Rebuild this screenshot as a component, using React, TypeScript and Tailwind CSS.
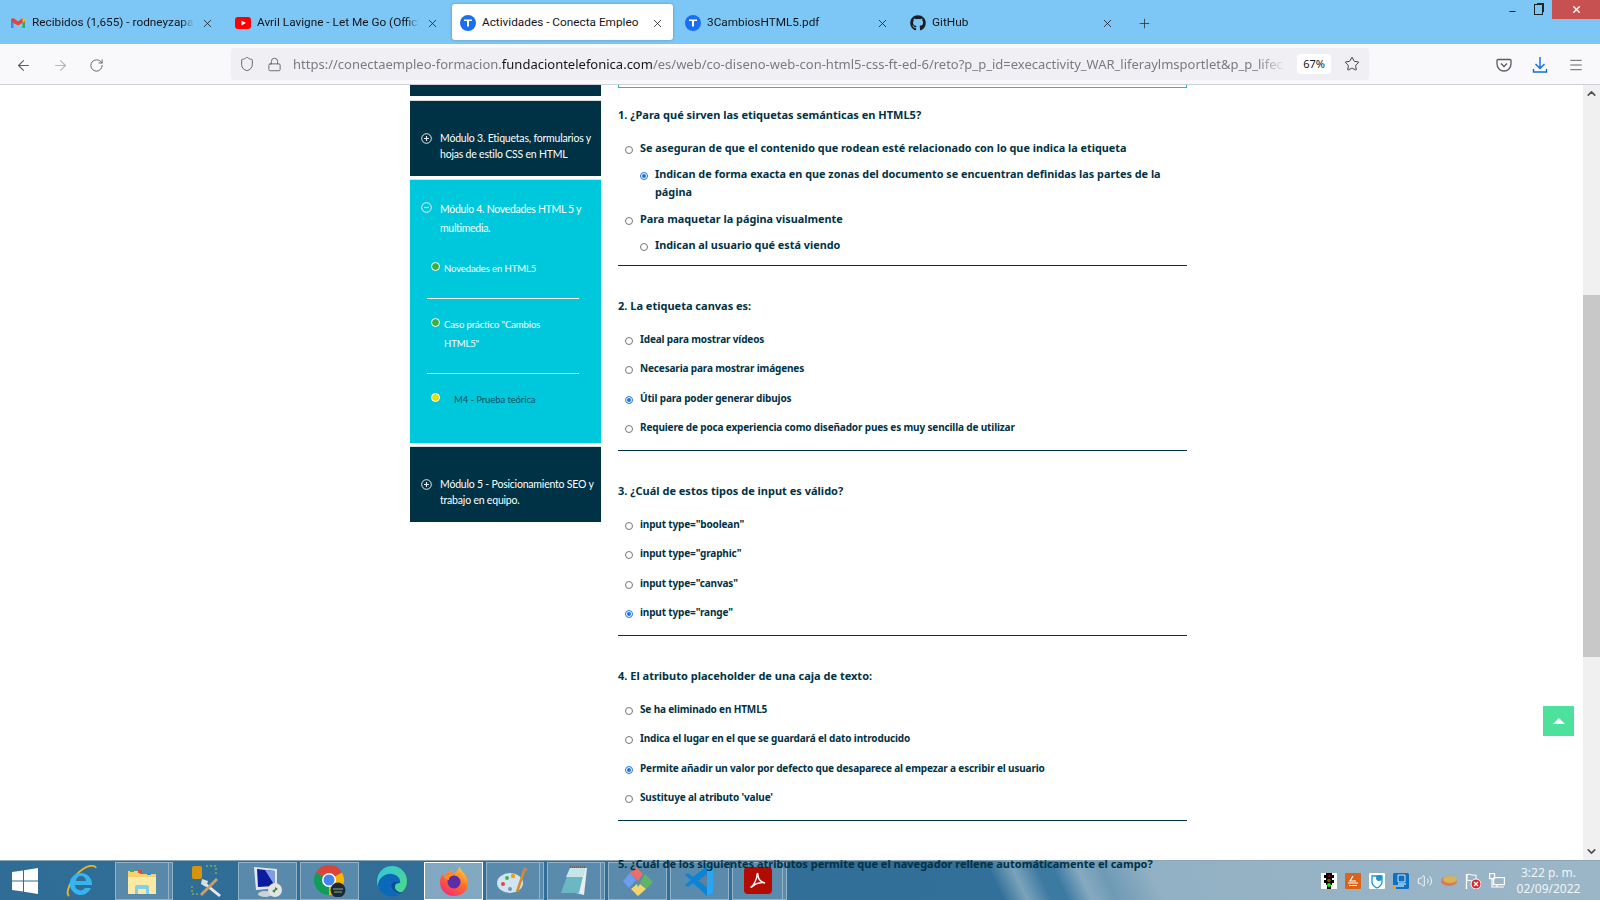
import { ArrowLeft, ArrowRight, RotateCw, Shield, Lock, Star, Menu, X, Plus, ChevronUp, ChevronDown, Minus, Volume2 } from 'lucide-react';
import { FaGithub } from 'react-icons/fa';

type Opcion = { texto: string; sub?: boolean; marcada?: boolean };

const TABS = [
  { titulo: 'Recibidos (1,655) - rodneyzapata@gmail.com', icono: 'gmail' },
  { titulo: 'Avril Lavigne - Let Me Go (Official Video)', icono: 'youtube' },
  { titulo: 'Actividades - Conecta Empleo', icono: 't', activa: true },
  { titulo: '3CambiosHTML5.pdf', icono: 't' },
  { titulo: 'GitHub', icono: 'github' },
];

const Q2: Opcion[] = [
  { texto: 'Ideal para mostrar vídeos' },
  { texto: 'Necesaria para mostrar imágenes' },
  { texto: 'Útil para poder generar dibujos', marcada: true },
  { texto: 'Requiere de poca experiencia como diseñador pues es muy sencilla de utilizar' },
];
const Q3: Opcion[] = [
  { texto: 'input type="boolean"' },
  { texto: 'input type="graphic"' },
  { texto: 'input type="canvas"' },
  { texto: 'input type="range"', marcada: true },
];
const Q4: Opcion[] = [
  { texto: 'Se ha eliminado en HTML5' },
  { texto: 'Indica el lugar en el que se guardará el dato introducido' },
  { texto: 'Permite añadir un valor por defecto que desaparece al empezar a escribir el usuario', marcada: true },
  { texto: "Sustituye al atributo 'value'" },
];

function TIcon() {
  return (
    <div className="w-4 h-4 rounded-full bg-[#1a6ff0] flex items-center justify-center shrink-0">
      <svg width="10" height="10" viewBox="0 0 10 10"><path d="M1 1.500h8v1.600H6v5.400H4V3.100H1z" fill="#fff" /></svg>
    </div>
  );
}

function TabIcon({ tipo }: { tipo: string }) {
  if (tipo === 't') return <TIcon />;
  if (tipo === 'github') return <FaGithub size={16} className="text-[#1b1f24] shrink-0" />;
  if (tipo === 'youtube') {
    return (
      <svg width="16" height="16" viewBox="0 0 16 16" className="shrink-0">
        <rect y="2" width="16" height="12" rx="3" fill="#f00" />
        <path d="M6.500 5.500 11 8l-4.500 2.500z" fill="#fff" />
      </svg>
    );
  }
  return (
    <svg width="16" height="16" viewBox="0 0 16 16" className="shrink-0">
      <path d="M1 4v9h2.500V6.500z" fill="#4285f4" />
      <path d="M15 4v9h-2.500V6.500z" fill="#34a853" />
      <path d="M12.500 3 15 4v2l-2.500 2z" fill="#fbbc04" />
      <path d="M3.500 3 1 4v2l2.500 2L8 10.500 12.500 8V3L8 6.500z" fill="#ea4335" />
    </svg>
  );
}

function Tab({ titulo, icono, activa }: { titulo: string; icono: string; activa?: boolean }) {
  return (
    <div className={`w-[221px] mr-1 h-9 flex items-center pl-2 pt-[2px] rounded-[3px] ${activa ? 'bg-white shadow-[0_0_3px_rgba(0,0,0,0.25)]' : ''}`}>
      <TabIcon tipo={icono} />
      <span className={`ml-[6px] w-[162px] overflow-hidden whitespace-nowrap font-['Roboto',sans-serif] text-[11.8px] text-[#15141a] ${activa ? '' : '[mask-image:linear-gradient(to_right,black_92%,transparent)]'}`}>
        {titulo}
      </span>
      <X size={13} strokeWidth={1.4} className="ml-[7px] text-[#15141a]" />
    </div>
  );
}

function Radio({ marcada }: { marcada?: boolean }) {
  return (
    <span className={`w-2 h-2 rounded-full border shrink-0 flex items-center justify-center bg-white ${marcada ? 'border-[#1a73e8]' : 'border-[#767676]'}`}>
      {marcada && <span className="w-1 h-1 rounded-full bg-[#1a73e8]" />}
    </span>
  );
}

function OpcionGrande({ texto, sub, marcada }: Opcion) {
  return (
    <div className={`flex items-start ${sub ? 'pl-[22px] pr-2' : 'pl-[7px]'} ${marcada ? 'pb-px' : ''}`}>
      <span className="mt-[7px]"><Radio marcada={marcada} /></span>
      <span className="ml-[7px] text-[10.85px] leading-[18px] font-bold text-[#003245]">{texto}</span>
    </div>
  );
}

function Pregunta({ titulo, opciones }: { titulo: string; opciones: Opcion[] }) {
  return (
    <div className="h-[185px] border-b border-[#003245] box-border pt-[30px]">
      <div className="h-5 flex items-center text-[11px] font-bold text-[#003245]">{titulo}</div>
      <div className="mt-[9px]">
        {opciones.map((o) => (
          <div key={o.texto} className="h-[29.33px] flex items-center pl-[7px]">
            <span className="mt-[3px]"><Radio marcada={o.marcada} /></span>
            <span className="ml-[7px] text-[10px] font-bold text-[#003245] tracking-[-0.15px]">{o.texto}</span>
          </div>
        ))}
      </div>
    </div>
  );
}

function CircleIcon({ mas }: { mas?: boolean }) {
  return (
    <svg width="11" height="11" viewBox="0 0 11 11" className="shrink-0">
      <circle cx="5.500" cy="5.500" r="4.800" fill="none" stroke="#e8eef0" strokeWidth="1" />
      <path d={mas ? 'M3 5.500h5M5.500 3v5' : 'M3 5.500h5'} stroke="#e8eef0" strokeWidth="1.200" />
    </svg>
  );
}

function ModuloOscuro({ lineas }: { lineas: string[] }) {
  return (
    <div className="h-[76px] bg-[#003245] border-t border-[#dddddd] flex items-center pl-[11px]">
      <CircleIcon mas />
      <div className="ml-2 mt-[14px] text-[10.5px] leading-4 text-white tracking-[-0.2px] whitespace-nowrap">
        {lineas.map((l) => <div key={l}>{l}</div>)}
      </div>
    </div>
  );
}

function Punto({ color }: { color: string }) {
  return <span className={`w-[9px] h-[9px] rounded-full border border-white shrink-0 ${color}`} />;
}

function Chip({ sliver, activo, ancho, children }: { sliver?: boolean; activo?: boolean; ancho: string; children: React.ReactNode }) {
  return (
    <div className="flex h-[38px] mr-[3px]">
      <div className={`${ancho} flex items-center justify-center border ${activo ? 'bg-white/40 border-white' : 'bg-white/20 border-white/35'}`}>
        {children}
      </div>
      {sliver && <div className="w-1 bg-white/20 border border-white/35 border-l-0" />}
    </div>
  );
}

function Edge() {
  return (
    <svg width="32" height="32" viewBox="0 0 32 32">
      <defs>
        <linearGradient id="edge1" x1="0" y1="0" x2="1" y2="1"><stop offset="0" stopColor="#33c6e0" /><stop offset="1" stopColor="#4fdc7c" /></linearGradient>
      </defs>
      <circle cx="16" cy="16" r="15" fill="url(#edge1)" />
      <path d="M2 20c1-8 8-12 14-11 6 1 9 5 8 9-5 1-9-1-9 3s5 8 9 8c-4 3-8 3-12 2C6 29 2 25 2 20z" fill="#0c68b8" />
      <path d="M15 21c0 4 5 8 9 8l3-2c-3 1-8-1-8-5s3-4 5-4c-3-2-9-2-9 3z" fill="#0a4f96" />
    </svg>
  );
}

function Chrome() {
  return (
    <svg width="32" height="32" viewBox="0 0 32 32">
      <path d="M15 15 2 7.500A15 15 0 0 1 28 7.500z" fill="#db4437" />
      <path d="M15 15 28 7.500A15 15 0 0 1 15 30z" fill="#f4b400" />
      <path d="M15 15V30A15 15 0 0 1 2 7.500z" fill="#0f9d58" />
      <circle cx="15" cy="15" r="7" fill="#fff" />
      <circle cx="15" cy="15" r="5.500" fill="#4285f4" />
      <circle cx="24" cy="25" r="7.500" fill="#1c2b33" />
      <path d="M19 24h10M20 27h8" stroke="#8fa89a" strokeWidth="1" />
    </svg>
  );
}

function Firefox() {
  return (
    <svg width="32" height="32" viewBox="0 0 32 32">
      <defs>
        <linearGradient id="ff1" x1="0.8" y1="0" x2="0.2" y2="1"><stop offset="0" stopColor="#ffd23a" /><stop offset="0.5" stopColor="#ff6a2b" /><stop offset="1" stopColor="#f5267a" /></linearGradient>
      </defs>
      <path d="M21 1c1 4 9 9 9 17 0 8-6 13-14 13S2 25 2 17c0-4 2-7 3-8 0 2 1 3 2 3 1-4 4-6 7-7-1 2 0 3 1 3 3 0 6-3 6-7z" fill="url(#ff1)" />
      <circle cx="16" cy="17" r="6.500" fill="#5a2ea6" />
      <path d="M6 12c3-3 8-4 11-2-4 0-6 2-6 5-2 0-4-1-5-3z" fill="#ff8a1e" />
    </svg>
  );
}

function Paleta() {
  return (
    <svg width="32" height="32" viewBox="0 0 32 32">
      <ellipse cx="13" cy="18" rx="13" ry="10" fill="#cfe6f2" />
      <circle cx="6" cy="19" r="2" fill="#e0483a" />
      <circle cx="10" cy="13" r="2" fill="#4cae4c" />
      <circle cx="16" cy="11" r="2.200" fill="#f0a020" />
      <circle cx="13" cy="24" r="2" fill="#7a94a8" />
      <path d="M28 3 20 27" stroke="#e08a1e" strokeWidth="2.500" />
      <path d="M25 8l3-6 3 3z" fill="#b78a60" />
    </svg>
  );
}

function Bloc() {
  return (
    <svg width="32" height="32" viewBox="0 0 32 32">
      <path d="M12 3h17l-3 27-8-2z" fill="#e7eef0" />
      <path d="M12 3h15l-6 25H3z" fill="#6cb7c4" />
      <path d="M12 3h15l-2 9H8z" fill="#c7e6ea" />
      <path d="M12 2h16" stroke="#666" strokeWidth="2" strokeDasharray="1 1" />
    </svg>
  );
}

function Kraken() {
  return (
    <svg width="32" height="32" viewBox="0 0 32 32">
      <path d="M16 16 8 8l6-6 7 7z" fill="#e8706a" />
      <path d="M1 16l7-8 6 7-7 8z" fill="#6d9df0" />
      <path d="M23 9l8 8-7 7-6-6z" fill="#5fb567" />
      <path d="M9 24l6-5 1 3 2-3 6 5-8 7z" fill="#f2d66b" />
    </svg>
  );
}

function VsCode() {
  return (
    <svg width="32" height="32" viewBox="0 0 32 32">
      <path d="M23 1 29 4v24l-6 3L9 18l-5 4-3-2 6-5-6-5 3-2 5 4z" fill="#0a84d6" />
      <path d="M23 1 29 4v24l-6 3z" fill="#2aa5f0" />
      <path d="M23 9 14 15.500l9 7z" fill="#5f7f9c" />
    </svg>
  );
}

function Acrobat() {
  return (
    <div className="w-7 h-[27px] rounded bg-[#b30b00] flex items-center justify-center">
      <svg width="18" height="18" viewBox="0 0 18 18" fill="none" stroke="#fff" strokeWidth="1.400">
        <path d="M2 15c3-2 6-8 6-12 0-2 1-2 1 0 0 4 3 7 7 8-3-1-9 0-12 3-1 1-2 2-2 1z" />
      </svg>
    </div>
  );
}

function Carpeta() {
  return (
    <svg width="32" height="32" viewBox="0 0 32 32">
      <path d="M2 6h10l2 3h16v20H2z" fill="#f6d26e" />
      <path d="M2 12h28v17H2z" fill="#fbe9a6" />
      <rect x="4" y="4" width="4" height="3" fill="#3cb04a" />
      <rect x="12" y="5" width="4" height="3" fill="#d94a3a" />
      <rect x="21" y="7" width="4" height="3" fill="#2f8fd8" />
      <path d="M9 29v-7a2 2 0 0 1 2-2h10a2 2 0 0 1 2 2v7h-3v-5h-8v5z" fill="#7fd0ea" />
    </svg>
  );
}

function IE() {
  return (
    <svg width="32" height="32" viewBox="0 0 32 32">
      <path d="M4 31C0 28 6 12 18 4c6-4 12-4 13-1" fill="none" stroke="#e8b320" strokeWidth="2" />
      <path d="M16 8a11 11 0 1 0 10 15h-6a5.500 5.500 0 0 1-10-3h17a11 11 0 0 0-11-12zm-5 8a5 5 0 0 1 10 0z" fill="#35b4ee" />
    </svg>
  );
}

function Herramientas() {
  return (
    <svg width="34" height="34" viewBox="0 0 34 34">
      <rect x="2" y="2" width="10" height="13" rx="2" fill="#d9940e" />
      <path d="M16 2h10v10M2 22v8h8" fill="none" stroke="#7fae3f" strokeWidth="1.500" strokeDasharray="2 2" />
      <path d="M13 20l16 13 2-2-16-13z" fill="#e8e8e8" />
      <path d="M28 16 12 32l-2-2 16-16z" fill="#c8a070" />
      <path d="M12 15l6 2-2 6-5-3z" fill="#d8dde0" />
    </svg>
  );
}

function Rdp() {
  return (
    <svg width="34" height="34" viewBox="0 0 34 34">
      <path d="M3 3 26 5v19L5 26z" fill="#e3e7ea" />
      <path d="M6 5 24 7v15L7 23z" fill="#0b1d9e" />
      <path d="M14 6 24 7v15z" fill="#7f9fe0" />
      <ellipse cx="14" cy="30" rx="7" ry="3" fill="#cfd2d4" />
      <circle cx="24" cy="26" r="7" fill="#e4e4e4" />
      <path d="M21 27l3-2v4zM27 25l-3 2v-4z" fill="#2e8b3a" />
    </svg>
  );
}

function Bandeja() {
  return (
    <div className="flex items-center gap-2 ml-auto mr-[6px]">
      <svg width="16" height="16" viewBox="0 0 16 16">
        <rect width="16" height="16" fill="#fff" />
        <path d="M5 0h6v2h2v3h-2v2h2v3h-2v2h-1v4H6v-4H5v-2H3V7h2V5H3V2h2z" fill="#000" />
        <circle cx="8" cy="3" r="1.800" fill="#6b0000" /><circle cx="8" cy="7.500" r="1.800" fill="#6f6000" /><circle cx="8" cy="12" r="2" fill="#19e619" />
      </svg>
      <svg width="16" height="16" viewBox="0 0 16 16">
        <rect width="16" height="16" rx="1" fill="#d9641a" />
        <path d="M3 10h10M4 12.500h8M8 3 5 8h6" stroke="#fff" strokeWidth="1.200" fill="none" />
      </svg>
      <svg width="16" height="16" viewBox="0 0 16 16">
        <rect width="16" height="16" rx="1" fill="#fff" />
        <path d="M3 3h10v6c0 3-3 5-5 6-2-1-5-3-5-6z" fill="none" stroke="#1796d6" strokeWidth="1.300" />
        <circle cx="10" cy="5" r="3" fill="#1796d6" />
      </svg>
      <svg width="16" height="16" viewBox="0 0 16 16">
        <rect width="16" height="16" rx="1.500" fill="#0d70c0" />
        <path d="M5 2h7v7H5z" fill="none" stroke="#fff" strokeWidth="0.800" />
        <path d="M5 11h8M3 13h8" stroke="#fff" strokeWidth="1" />
        <path d="M0 12h3v4H0z" fill="#f0a020" />
      </svg>
      <Volume2 size={16} className="text-white" strokeWidth={1.300} />
      <svg width="16" height="10" viewBox="0 0 16 10">
        <ellipse cx="8" cy="5" rx="8" ry="5" fill="#d97b5a" />
        <ellipse cx="9" cy="3.500" rx="7" ry="3.500" fill="#d4b55a" />
      </svg>
      <svg width="16" height="16" viewBox="0 0 16 16">
        <path d="M1.500 1v15" stroke="#fff" strokeWidth="1.300" />
        <path d="M2 1.500c3-1 5 1.500 9 .500v6c-4 1-6-1.500-9-.500z" fill="none" stroke="#fff" />
        <circle cx="11" cy="11" r="5" fill="#d8262c" stroke="#fff" />
        <path d="M9 9l4 4M13 9l-4 4" stroke="#fff" strokeWidth="1.300" />
      </svg>
      <svg width="16" height="16" viewBox="0 0 16 16" fill="none" stroke="#fff" strokeWidth="1.200">
        <rect x="0.600" y="0.600" width="5" height="5" />
        <rect x="4.600" y="4.600" width="10.800" height="7" />
        <path d="M3 6v8h12M8 12v2" />
      </svg>
    </div>
  );
}

export default function App() {
  return (
    <div className="w-[1600px] h-[900px] flex flex-col overflow-hidden bg-white font-['Noto_Sans',sans-serif]">
      <div className="h-11 shrink-0 bg-[#7cc7f5] flex pl-[2px] pt-1 relative">
        {TABS.map((t) => <Tab key={t.icono + t.titulo} {...t} />)}
        <Plus size={15} strokeWidth={1.300} className="ml-[10px] mt-[12px] text-[#333]" />
        <div className="ml-auto flex items-start h-[19px] mt-[-4px]">
          <Minus size={9} strokeWidth={3} className="mt-[7px] text-[#222]" />
          <div className="ml-[17px] mt-1 w-[9px] h-[11px] border border-[#222] shadow-[2px_-2px_0_-1px_#222]" />
          <div className="ml-[9px] w-12 h-[19px] bg-[#c75050] flex items-center justify-center">
            <X size={11} strokeWidth={3} className="text-white" />
          </div>
        </div>
      </div>

      <div className="h-[41px] shrink-0 bg-[#f9f9fb] border-b border-[#cfcfd8] flex items-center text-[#5b5b66] pt-[2px]">
        <ArrowLeft size={17} strokeWidth={1.500} className="ml-[15px]" />
        <ArrowRight size={17} strokeWidth={1.500} className="ml-5 text-[#b5b5bc]" />
        <RotateCw size={15} strokeWidth={1.500} className="ml-[20px]" />
        <div className="ml-[127px] w-[1138px] h-8 mt-[-2px] rounded bg-[#f0f0f4] flex items-center">
          <Shield size={16} strokeWidth={1.400} className="ml-2" />
          <Lock size={15} strokeWidth={1.400} className="ml-[12px]" />
          <div className="ml-[11px] w-[994px] mt-[2px] overflow-hidden whitespace-nowrap text-[13px] text-[#7a7a82] [mask-image:linear-gradient(to_right,black_97%,transparent)]">
            https://conectaempleo-formacion.<span className="text-[#15141a]">fundaciontelefonica.com</span>/es/web/co-diseno-web-con-html5-css-ft-ed-6/reto?p_p_id=execactivity_WAR_liferaylmsportlet&amp;p_p_lifec
          </div>
          <div className="ml-[10px] w-[34px] h-5 rounded-sm bg-white flex items-center justify-center text-[11px] text-[#15141a]">67%</div>
          <Star size={16} strokeWidth={1.400} className="ml-[13px] text-[#333]" />
        </div>
        <svg width="16" height="16" viewBox="0 0 16 16" fill="none" stroke="currentColor" strokeWidth="1.300" className="ml-[127px]">
          <path d="M2 2.500h12a1 1 0 0 1 1 1V7a7 7 0 0 1-14 0V3.500a1 1 0 0 1 1-1z" />
          <path d="m5 6.500 3 3 3-3" />
        </svg>
        <svg width="16" height="18" viewBox="0 0 16 18" fill="none" stroke="#0a6cf0" strokeWidth="1.400" className="ml-5">
          <path d="M8 1v11M3.500 8 8 12.500 12.500 8M1.500 13v3h13v-3" />
        </svg>
        <Menu size={16} strokeWidth={1.400} className="ml-5" />
      </div>

      <div className="flex-1 min-h-0 flex relative">
        <div className="w-[410px] shrink-0" />
        <div className="w-[191px] shrink-0 font-['Lato',sans-serif]">
          <div className="h-[11px] bg-[#003245]" />
          <div className="mt-1"><ModuloOscuro lineas={['Módulo 3. Etiquetas, formularios y', 'hojas de estilo CSS en HTML']} /></div>
          <div className="mt-[3px] h-[264px] bg-[#00c8dc] border-t border-[#dddddd] text-white">
            <div className="flex items-start pl-[11px] pt-5">
              <span className="mt-[2px]"><CircleIcon /></span>
              <div className="ml-2 text-[10.5px] leading-[19px] tracking-[-0.3px]">Módulo 4. Novedades HTML 5 y<br />multimedia.</div>
            </div>
            <div className="mt-5 pl-[17px] pr-[22px] tracking-[-0.1px]">
              <div className="flex items-start h-[41px] pl-1 pt-1 border-b border-white">
                <Punto color="bg-[#3cae3c]" />
                <span className="ml-[4px] text-[9.5px] leading-[19px] mt-[-3px]">Novedades en HTML5</span>
              </div>
              <div className="flex items-start h-[75px] pl-1 pt-[19px] border-b border-white">
                <Punto color="bg-[#3cae3c]" />
                <span className="ml-[4px] text-[9.5px] leading-[19px] mt-[-3px]">Caso práctico "Cambios<br />HTML5"</span>
              </div>
              <div className="flex items-start pl-1 pt-[19px]">
                <Punto color="bg-[#e5e000]" />
                <span className="ml-[14px] text-[9.5px] leading-[19px] mt-[-3px] text-[#00505f]">M4 - Prueba teórica</span>
              </div>
            </div>
          </div>
          <div className="mt-[3px]"><ModuloOscuro lineas={['Módulo 5 - Posicionamiento SEO y', 'trabajo en equipo.']} /></div>
        </div>

        <div className="ml-[17px] w-[569px] shrink-0">
          <div className="h-[3px] border border-t-0 border-[#00c8dc]" />
          <div className="border-b border-[#003245] h-[178px] box-border pt-[17px]">
            <div className="h-5 flex items-center text-[11px] font-bold text-[#003245]">1. ¿Para qué sirven las etiquetas semánticas en HTML5?</div>
            <div className="mt-[14px] flex flex-col gap-2">
              <OpcionGrande texto="Se aseguran de que el contenido que rodean esté relacionado con lo que indica la etiqueta" />
              <OpcionGrande sub marcada texto="Indican de forma exacta en que zonas del documento se encuentran definidas las partes de la página" />
              <OpcionGrande texto="Para maquetar la página visualmente" />
              <OpcionGrande sub texto="Indican al usuario qué está viendo" />
            </div>
          </div>
          <Pregunta titulo="2. La etiqueta canvas es:" opciones={Q2} />
          <Pregunta titulo="3. ¿Cuál de estos tipos de input es válido?" opciones={Q3} />
          <Pregunta titulo="4. El atributo placeholder de una caja de texto:" opciones={Q4} />
          <div className="pt-[35px] text-[11px] font-bold text-[#003245] whitespace-nowrap overflow-hidden">5. ¿Cuál de los siguientes atributos permite que el navegador rellene automáticamente el campo?</div>
        </div>

        <div className="flex-1" />
        <div className="w-[17px] shrink-0 bg-[#f0f0f0] flex flex-col items-center">
          <ChevronUp size={13} strokeWidth={3} className="mt-[2px] text-[#505050]" />
          <div className="mt-[195px] w-full h-[362px] bg-[#c8c8c8]" />
          <ChevronDown size={13} strokeWidth={3} className="mt-auto mb-[2px] text-[#505050]" />
        </div>

        <div className="absolute left-[1543px] top-[621px] w-[31px] h-[30px] bg-[#4de19e] flex items-center justify-center">
          <div className="w-0 h-0 border-x-[6px] border-x-transparent border-b-[6px] border-b-white" />
        </div>
      </div>

      <div className="h-10 shrink-0 flex items-center border-t border-[#8aa6b8] bg-[linear-gradient(65deg,#2f6c96_0%,#326f99_62%,#7ba3bb_63.5%,#3d7aa2_65%,#3d7aa2_66%,#86aac0_67.5%,#6f9ab5_69%,#93b1c4_72%,#9bb6c7_100%)]">
        <svg width="26" height="26" viewBox="0 0 26 26" className="ml-3" fill="#fff">
          <path d="M0 4 11 2.500V12.500H0zM12 2.300 26 0V12.500H12zM0 13.500H11V23.500L0 22zM12 13.500H26V26L12 23.700z" />
        </svg>
        <div className="ml-[27px] w-8"><IE /></div>
        <div className="ml-[18px]"><Chip ancho="w-[54px]" sliver><Carpeta /></Chip></div>
        <div className="ml-[14px] w-[34px]"><Herramientas /></div>
        <div className="ml-[14px]"><Chip ancho="w-[59px]"><Rdp /></Chip></div>
        <Chip ancho="w-[59px]"><Chrome /></Chip>
        <div className="ml-[14px] w-8"><Edge /></div>
        <div className="ml-4"><Chip ancho="w-[59px]" activo><Firefox /></Chip></div>
        <Chip ancho="w-[54px]" sliver><Paleta /></Chip>
        <Chip ancho="w-[54px]" sliver><Bloc /></Chip>
        <Chip ancho="w-[59px]"><Kraken /></Chip>
        <Chip ancho="w-[59px]"><VsCode /></Chip>
        <Chip ancho="w-[51px]" sliver><Acrobat /></Chip>
        <Bandeja />
        <div className="w-[75px] mr-[14px] text-[12px] leading-4 text-[#f0f4f7] text-center">3:22 p. m.<br />02/09/2022</div>
      </div>
    </div>
  );
}
